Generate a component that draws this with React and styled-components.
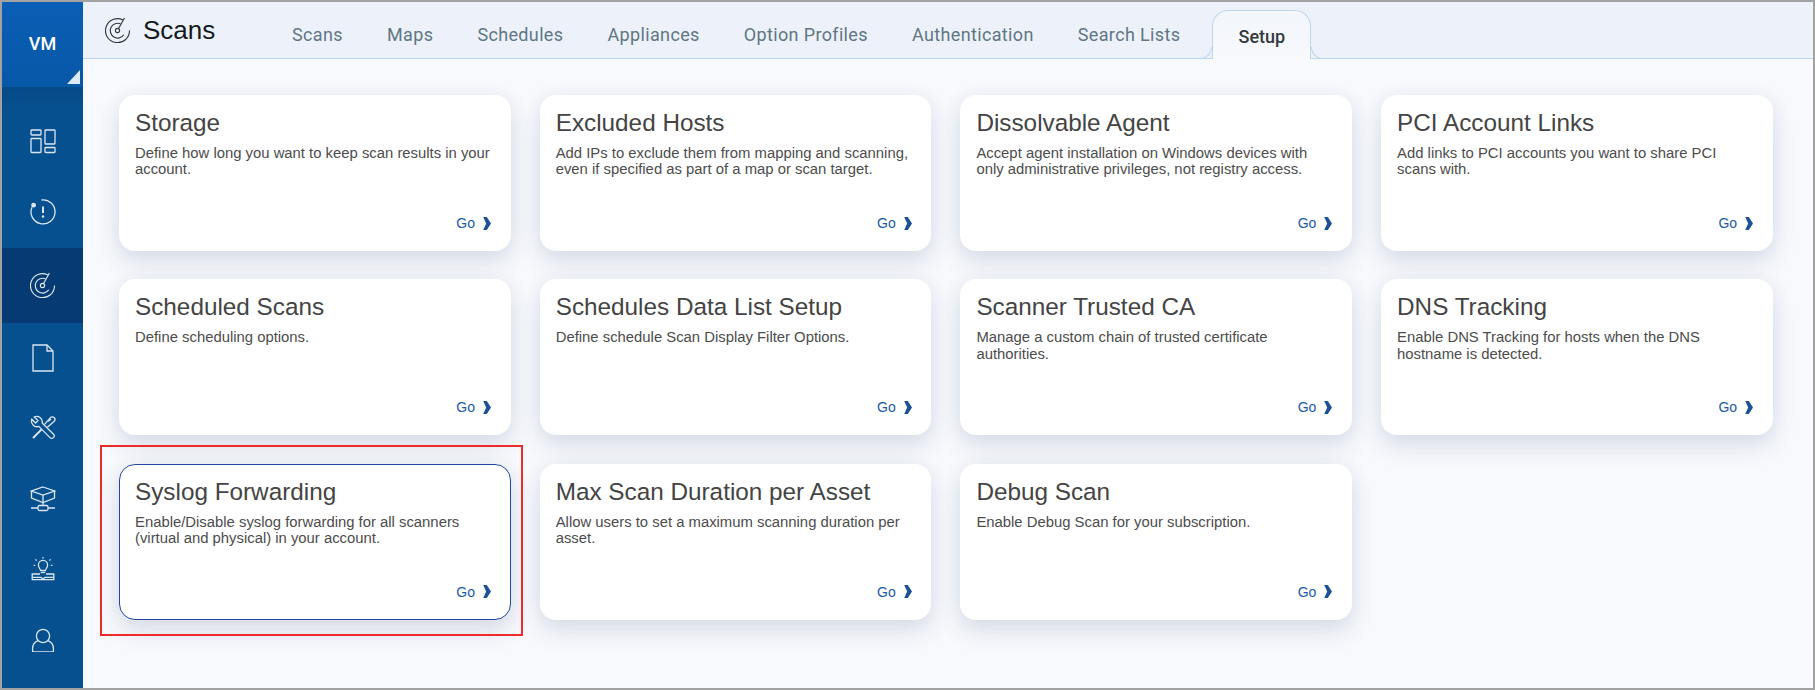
import React from "react";
import styled, { createGlobalStyle } from "styled-components";

const GlobalStyle = createGlobalStyle`
    html, body {
        margin: 0;
        padding: 0;
        background: #fff;
    }
    body {
        font-family: "Liberation Sans", Arial, sans-serif;
    }
`;

const Frame = styled.div`
    width: 1815px;
    height: 690px;
    box-sizing: border-box;
    border: 2px solid #a2a2a2;
    display: flex;
    overflow: hidden;
    background: #f7f9fd;
`;

const Sidebar = styled.aside`
    width: 81px;
    flex: none;
    background: #07508f;
    display: flex;
    flex-direction: column;
`;

const AppBadge = styled.div`
    position: relative;
    height: 85px;
    box-sizing: border-box;
    padding-top: 32px;
    background: linear-gradient(#0a5eb5, #0858a8);
    color: #fff;
    font-family: Roboto, "Liberation Sans", sans-serif;
    font-size: 18px;
    font-weight: 500;
    line-height: 20px;
    text-align: center;
    &::after {
        content: "";
        position: absolute;
        right: 3px;
        bottom: 3px;
        border-style: solid;
        border-width: 0 0 14px 13px;
        border-color: transparent transparent #dce8f5 transparent;
    }
`;

const NavList = styled.nav`
    padding-top: 19.5px;
    display: flex;
    flex-direction: column;
    background: linear-gradient(#064a88, #07508f 24px);
    flex: 1;
`;

const NavItem = styled.div`
    height: ${props => (props.$active ? "75px" : "70.5px")};
    flex: none;
    background: ${props => (props.$active ? "#063a72" : "transparent")};
    display: flex;
    align-items: center;
    justify-content: center;
    color: #dbe6f2;
`;

const Main = styled.main`
    flex: 1;
    min-width: 0;
    display: flex;
    flex-direction: column;
`;

const TopBar = styled.header`
    height: 57px;
    flex: none;
    box-sizing: border-box;
    border-bottom: 1px solid #bcd6ef;
    background: #edf2fa;
    display: flex;
    align-items: flex-end;
`;

const PageTitle = styled.div`
    width: 209px;
    flex: none;
    box-sizing: border-box;
    padding: 0 0 13px 22px;
    display: flex;
    align-items: center;
    gap: 12px;
    align-self: flex-end;
    color: #33393f;
    font-size: 26px;
    line-height: 30px;
`;

const PageTitleText = styled.span`
    color: #16191d;
`;

const Tabs = styled.div`
    display: flex;
    align-items: flex-end;
    gap: 44.1px;
`;

const Tab = styled.a`
    font-family: Roboto, "Liberation Sans", sans-serif;
    font-size: 18px;
    letter-spacing: 0.35px;
    line-height: 24px;
    padding-bottom: 11px;
    color: #5f7684;
`;

const ActiveTab = styled.a`
    position: relative;
    width: 99px;
    height: 49px;
    margin: 0 0 -1px -12px;
    box-sizing: border-box;
    border: 1px solid #bcd6ef;
    border-bottom: none;
    border-radius: 16px 16px 0 0;
    background: linear-gradient(#f3f6fc, #f7f9fd);
    display: flex;
    align-items: center;
    justify-content: center;
    padding-top: 3px;
    font-family: Roboto, "Liberation Sans", sans-serif;
    font-size: 18px;
    font-weight: 500;
    color: #333a40;
    &::before, &::after {
        content: "";
        position: absolute;
        bottom: 0;
        width: 12px;
        height: 12px;
        box-sizing: border-box;
        border-bottom: 1px solid #bcd6ef;
        background: #edf2fa;
    }
    &::before {
        left: -13px;
        border-right: 1px solid #bcd6ef;
        border-bottom-right-radius: 12px;
    }
    &::after {
        right: -13px;
        border-left: 1px solid #bcd6ef;
        border-bottom-left-radius: 12px;
    }
`;

const Content = styled.section`
    flex: 1;
    padding: 36px 0 0 36px;
    display: grid;
    grid-template-columns: repeat(4, 391.5px);
    grid-auto-rows: 156px;
    column-gap: 29.2px;
    row-gap: 28.4px;
    align-content: start;
`;

const Card = styled.article`
    position: relative;
    box-sizing: border-box;
    padding: 13px 18.5px 18px 15px;
    border: 1px solid ${props => (props.$selected ? "#2347a5" : "transparent")};
    border-radius: 16px;
    background: #fff;
    box-shadow: 0 12px 24px rgba(30, 50, 100, 0.12), 0 0 20px rgba(30, 50, 100, 0.05);
    display: flex;
    flex-direction: column;
`;

const Highlight = styled.span`
    position: absolute;
    top: -20px;
    left: -20px;
    right: -13px;
    bottom: -17px;
    border: 2px solid #ee2b2b;
    pointer-events: none;
`;

const CardTitle = styled.h3`
    margin: 0 0 8px;
    font-size: 24.3px;
    font-weight: normal;
    line-height: 28px;
    color: #444;
`;

const CardText = styled.p`
    margin: 0;
    font-size: 14.85px;
    line-height: 16.4px;
    color: #4c4c4c;
`;

const GoLink = styled.a`
    margin-top: auto;
    align-self: flex-end;
    display: flex;
    align-items: center;
    gap: 8px;
    font-size: 14px;
    line-height: 18px;
    color: #1a5aa8;
`;

const Icon = ({ size = 26, height, children, color = "currentColor", width = 1.3 }) => (
    <svg width={size} height={height || size} viewBox={`0 0 ${size} ${height || size}`} fill="none" stroke={color} strokeWidth={width}>
        {children}
    </svg>
);

const RadarIcon = props => (
    <Icon width={1.15} {...props}>
        <path d="M18 3A12 12 0 1 0 24.5 13.5" />
        <path d="M15.5 6.8A7.4 7.4 0 1 0 18.8 17.8" />
        <circle cx="12.5" cy="13.5" r="2.1" />
        <path d="M13.6 11.5L19.4 1" />
    </Icon>
);

const DashboardIcon = () => (
    <Icon>
        <rect x="1" y="1" width="10" height="5" rx="0.8" />
        <rect x="1" y="9.5" width="10" height="14" rx="0.8" />
        <rect x="15" y="1" width="10" height="14" rx="0.8" />
        <rect x="15" y="18.5" width="10" height="5" rx="0.8" />
    </Icon>
);

const AlertIcon = () => (
    <Icon>
        <path d="M11.5 1A12 12 0 1 1 2 8.2" />
        <circle cx="3.6" cy="6.2" r="2.4" fill="currentColor" stroke="none" />
        <path d="M13 7.5V14" strokeWidth="2" />
        <circle cx="13" cy="17.5" r="1.2" fill="currentColor" stroke="none" />
    </Icon>
);

const DocIcon = () => (
    <Icon size={22} height={28}>
        <path d="M1 1H15L21 7V27H1Z" />
        <path d="M15 1V7H21" />
    </Icon>
);

const ToolsIcon = () => (
    <Icon>
        <path d="M4.2 2L8 5.6L5.6 8L1.8 4.2A5.6 5.6 0 0 0 8.8 11.4L20 22.6A2.4 2.4 0 0 0 23.5 19.2L12.2 8A5.6 5.6 0 0 0 4.2 2Z" />
        <path d="M14.6 9.4L20.4 2.6A2.4 2.4 0 0 1 24.2 6.2L17.4 12.2" />
        <path d="M18.2 6.6L21 4" />
        <path d="M11.6 14.4L3 23" strokeWidth="2" />
    </Icon>
);

const NetworkIcon = () => (
    <Icon>
        <path d="M13 1L24.5 5L13 9L1.5 5Z" />
        <path d="M1.5 5V12L13 16.5L24.5 12V5" />
        <path d="M13 9V20" />
        <rect x="8" y="19.5" width="10" height="5" rx="1.5" />
        <path d="M1 22H8M18 22H25" />
    </Icon>
);

const BulbIcon = () => (
    <Icon size={24}>
        <path d="M9.6 13.5C9 11.5 7.4 10.6 7.4 8A4.6 4.6 0 0 1 16.6 8C16.6 10.6 15 11.5 14.4 13.5Z" />
        <path d="M9.8 15.5H14.2" />
        <path d="M12 0V1.6M4.4 2.4L5.6 3.6M19.6 2.4L18.4 3.6M2.6 8.4H4.2M19.8 8.4H21.4" />
        <path d="M9 17H1.2V22.6H22.8V17H15" />
        <path d="M1.2 20.4H10L12 22L14 20.4H22.8" />
    </Icon>
);

const UserIcon = () => (
    <Icon size={24}>
        <circle cx="12" cy="8" r="6.6" />
        <path d="M7 12.6C4 13.8 1.6 16.6 1.6 20.6V24H22.4V20.6C22.4 16.6 20 13.8 17 12.6" />
    </Icon>
);

const Chevron = () => (
    <svg width="8" height="13" viewBox="0 0 8 13">
        <path d="M0.2 0H3.8L8 6.5L3.8 13H0.2L3.2 6.5Z" fill="#1d5196" />
    </svg>
);

const navIcons = [
    { id: "dashboard", icon: <DashboardIcon /> },
    { id: "alerts", icon: <AlertIcon /> },
    { id: "scans", icon: <RadarIcon />, active: true },
    { id: "reports", icon: <DocIcon /> },
    { id: "tools", icon: <ToolsIcon /> },
    { id: "network", icon: <NetworkIcon /> },
    { id: "kb", icon: <BulbIcon /> },
    { id: "user", icon: <UserIcon /> },
];

const tabs = ["Scans", "Maps", "Schedules", "Appliances", "Option Profiles", "Authentication", "Search Lists"];

const cards = [
    { title: "Storage", text: "Define how long you want to keep scan results in your account." },
    { title: "Excluded Hosts", text: "Add IPs to exclude them from mapping and scanning, even if specified as part of a map or scan target." },
    { title: "Dissolvable Agent", text: "Accept agent installation on Windows devices with only administrative privileges, not registry access." },
    { title: "PCI Account Links", text: "Add links to PCI accounts you want to share PCI scans with." },
    { title: "Scheduled Scans", text: "Define scheduling options." },
    { title: "Schedules Data List Setup", text: "Define schedule Scan Display Filter Options." },
    { title: "Scanner Trusted CA", text: "Manage a custom chain of trusted certificate authorities." },
    { title: "DNS Tracking", text: "Enable DNS Tracking for hosts when the DNS hostname is detected." },
    { title: "Syslog Forwarding", text: "Enable/Disable syslog forwarding for all scanners (virtual and physical) in your account.", selected: true },
    { title: "Max Scan Duration per Asset", text: "Allow users to set a maximum scanning duration per asset." },
    { title: "Debug Scan", text: "Enable Debug Scan for your subscription." },
];

const App = () => (
    <>
        <GlobalStyle />
        <Frame>
            <Sidebar>
                <AppBadge>VM</AppBadge>
                <NavList>
                    {navIcons.map(item => (
                        <NavItem key={item.id} $active={item.active}>{item.icon}</NavItem>
                    ))}
                </NavList>
            </Sidebar>
            <Main>
                <TopBar>
                    <PageTitle>
                        <RadarIcon />
                        <PageTitleText>Scans</PageTitleText>
                    </PageTitle>
                    <Tabs>
                        {tabs.map(tab => <Tab key={tab}>{tab}</Tab>)}
                        <ActiveTab>Setup</ActiveTab>
                    </Tabs>
                </TopBar>
                <Content>
                    {cards.map(card => (
                        <Card key={card.title} $selected={card.selected}>
                            {card.selected && <Highlight />}
                            <CardTitle>{card.title}</CardTitle>
                            <CardText>{card.text}</CardText>
                            <GoLink>Go <Chevron /></GoLink>
                        </Card>
                    ))}
                </Content>
            </Main>
        </Frame>
    </>
);

export default App;
